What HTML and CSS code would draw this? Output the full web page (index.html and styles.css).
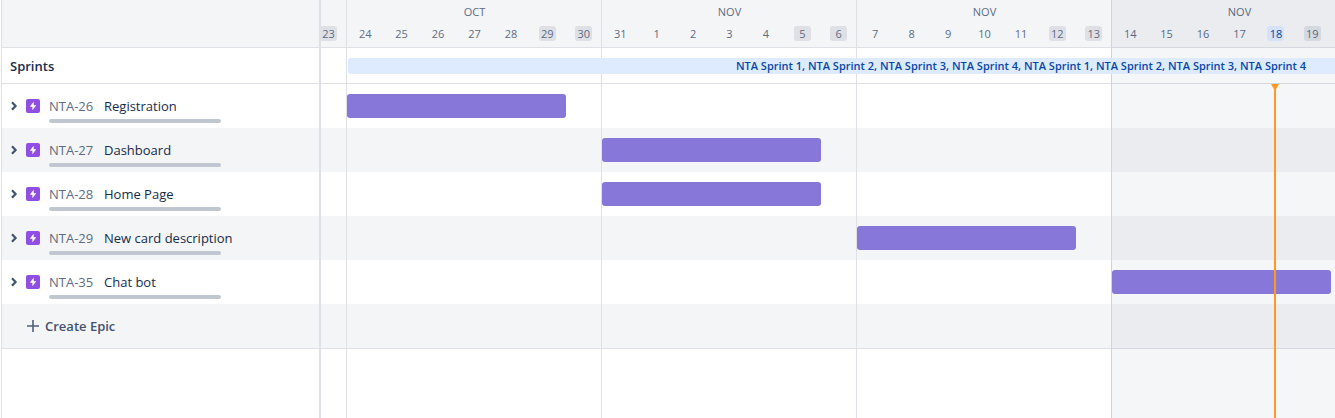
FILE: index.html
```html
<!DOCTYPE html>
<html lang="en">
<head>
<meta charset="utf-8">
<title>Roadmap</title>
<link rel="stylesheet" href="styles.css">
</head>
<body>
<svg class="sprite" aria-hidden="true">
  <symbol id="chevron" viewBox="0 0 8 10"><path d="M2 1.2 5.6 5 2 8.8" fill="none" stroke="#42526e" stroke-width="2.2"/></symbol>
  <symbol id="epic" viewBox="0 0 14 14"><rect width="14" height="14" rx="2" fill="#904ee2"/><path d="M7.7 2.8v3.5h2.6L6.4 11.2V7.8H3.8z" fill="#fff"/></symbol>
</svg>
<main class="roadmap">
  <section class="sidebar" aria-label="Epics">
    <div class="head"></div>
    <h2 class="sprints-title">Sprints</h2>
    <ul class="rows">
      <li class="row epic"><button class="expand" aria-label="Expand NTA-26"><svg><use href="#chevron"/></svg></button><svg class="type"><use href="#epic"/></svg><div class="info"><div class="name"><a class="key" href="#NTA-26">NTA-26</a><span>Registration</span></div><div class="progress"></div></div></li>
      <li class="row epic"><button class="expand" aria-label="Expand NTA-27"><svg><use href="#chevron"/></svg></button><svg class="type"><use href="#epic"/></svg><div class="info"><div class="name"><a class="key" href="#NTA-27">NTA-27</a><span>Dashboard</span></div><div class="progress"></div></div></li>
      <li class="row epic"><button class="expand" aria-label="Expand NTA-28"><svg><use href="#chevron"/></svg></button><svg class="type"><use href="#epic"/></svg><div class="info"><div class="name"><a class="key" href="#NTA-28">NTA-28</a><span>Home Page</span></div><div class="progress"></div></div></li>
      <li class="row epic"><button class="expand" aria-label="Expand NTA-29"><svg><use href="#chevron"/></svg></button><svg class="type"><use href="#epic"/></svg><div class="info"><div class="name"><a class="key" href="#NTA-29">NTA-29</a><span>New card description</span></div><div class="progress"></div></div></li>
      <li class="row epic"><button class="expand" aria-label="Expand NTA-35"><svg><use href="#chevron"/></svg></button><svg class="type"><use href="#epic"/></svg><div class="info"><div class="name"><a class="key" href="#NTA-35">NTA-35</a><span>Chat bot</span></div><div class="progress"></div></div></li>
      <li class="row"><button class="create"><svg viewBox="0 0 12 12"><path d="M6 0v12M0 6h12" stroke="#505f79" stroke-width="1.6"/></svg>Create Epic</button></li>
    </ul>
  </section>
  <section class="chart" aria-label="Timeline">
    <div class="head track">
      <div class="week first"><div class="month"></div><div class="days"><span class="off">23</span></div></div>
      <div class="week"><div class="month">OCT</div><div class="days"><span>24</span><span>25</span><span>26</span><span>27</span><span>28</span><span class="off">29</span><span class="off">30</span></div></div>
      <div class="week"><div class="month">NOV</div><div class="days"><span>31</span><span>1</span><span>2</span><span>3</span><span>4</span><span class="off">5</span><span class="off">6</span></div></div>
      <div class="week"><div class="month">NOV</div><div class="days"><span>7</span><span>8</span><span>9</span><span>10</span><span>11</span><span class="off">12</span><span class="off">13</span></div></div>
      <div class="week"><div class="month">NOV</div><div class="days"><span>14</span><span>15</span><span>16</span><span>17</span><span class="today">18</span><span class="off">19</span></div></div>
    </div>
    <div class="sprint-row"><div class="sprint">NTA Sprint 1, NTA Sprint 2, NTA Sprint 3, NTA Sprint 4, NTA Sprint 1, NTA Sprint 2, NTA Sprint 3, NTA Sprint 4</div></div>
    <div class="rows">
      <div class="row track"><div class="bar week-1"></div></div>
      <div class="row track"><div class="bar week-2"></div></div>
      <div class="row track"><div class="bar week-2"></div></div>
      <div class="row track"><div class="bar week-3"></div></div>
      <div class="row track"><div class="bar week-4"></div></div>
      <div class="row track"></div>
    </div>
    <div class="gridlines"><i></i><i></i><i></i><i></i><i class="current"></i></div>
    <div class="now"></div>
  </section>
</main>
</body>
</html>
```
FILE: styles.css
```css
* { box-sizing: border-box; }
body {
  margin: 0;
  background: #fff;
  color: #172b4d;
  font: 13px/18px "Open Sans", "Noto Sans", sans-serif;
}
button { border: 0; padding: 0; background: none; color: inherit; font: inherit; cursor: pointer; }
.sprite { display: none; }
.roadmap {
  display: grid;
  grid-template-columns: 320px minmax(0, 1fr);
  min-height: 100vh;
  padding-left: 1px;
}
.sidebar { border-left: 1px solid #dfe0e6; border-right: 2px solid #dfe0e6; }
.head { height: 48px; background: #f4f5f7; border-bottom: 1px solid #dfe0e6; }
.sprints-title {
  margin: 0;
  height: 36px;
  padding: 9px 8px;
  border-bottom: 1px solid #dfe0e6;
  font-size: 13px;
  line-height: 18px;
  font-weight: 600;
}
.rows { margin: 0; padding: 0; list-style: none; border-bottom: 1px solid #dfe0e6; }
.row { height: 44px; }
.row:nth-child(even) { background: #f4f5f7; }
.epic { display: flex; align-items: flex-start; padding: 13px 8px 0; }
.expand { display: flex; align-items: center; width: 16px; height: 18px; }
.expand svg { width: 8px; height: 10px; }
.type { width: 14px; height: 14px; margin: 2px 9px 0 0; }
.name { display: flex; white-space: nowrap; }
.key { width: 55px; color: #5e6c84; text-decoration: none; }
.progress { width: 172px; height: 4px; margin-top: 4px; border-radius: 2px; background: #c1c7d0; }
.create { display: flex; align-items: center; gap: 6px; height: 44px; padding-left: 25px; color: #42526e; font-weight: 600; }
.create svg { width: 12px; height: 12px; }

.chart { --week: 255px; position: relative; overflow: hidden; }
.track { display: grid; grid-template-columns: 26px repeat(4, var(--week)); }
.week { padding-top: 3px; color: #5e6c84; font-size: 11px; text-align: center; }
.month { height: 18px; line-height: 18px; }
.days { display: grid; grid-template-columns: repeat(7, 1fr); justify-items: center; padding-top: 5px; }
.days span { width: 17px; border-radius: 3px; line-height: 15px; }
.days .off { background: #dfe0e6; }
.days .today { background: #deebff; color: #0747a6; }
.first .days { display: flex; justify-content: flex-end; padding-right: 10px; }
.first .days span { flex: none; }
.sprint-row { height: 36px; padding: 10px 0 0 27px; border-bottom: 1px solid #dfe0e6; }
.sprint {
  position: relative;
  z-index: 2;
  width: 1346px;
  border-radius: 3px;
  background: #deebff;
  color: #0747a6;
  font-size: 11px;
  font-weight: 600;
  line-height: 16px;
  text-align: center;
  white-space: nowrap;
}
.track.row { align-items: center; }
.bar { position: relative; z-index: 2; width: 219px; height: 24px; border-radius: 3px; background: #8777d9; }
.week-1 { grid-column: 2; }
.week-2 { grid-column: 3; }
.week-3 { grid-column: 4; }
.week-4 { grid-column: 5; }
.gridlines {
  position: absolute;
  inset: 0;
  z-index: 1;
  display: grid;
  grid-template-columns: 25px repeat(4, var(--week));
  pointer-events: none;
}
.gridlines i + i { border-left: 1px solid #dfe0e6; }
.gridlines i.current { background: rgba(9, 30, 66, 0.04); border-left-color: #d2d4dc; }
.now { position: absolute; z-index: 3; top: 84px; bottom: 0; left: 953px; width: 2px; background: #ff991f; }
.now::before {
  content: "";
  position: absolute;
  top: 0;
  left: -3px;
  border: 4px solid transparent;
  border-top: 7px solid #ff991f;
  border-bottom: 0;
}
```
